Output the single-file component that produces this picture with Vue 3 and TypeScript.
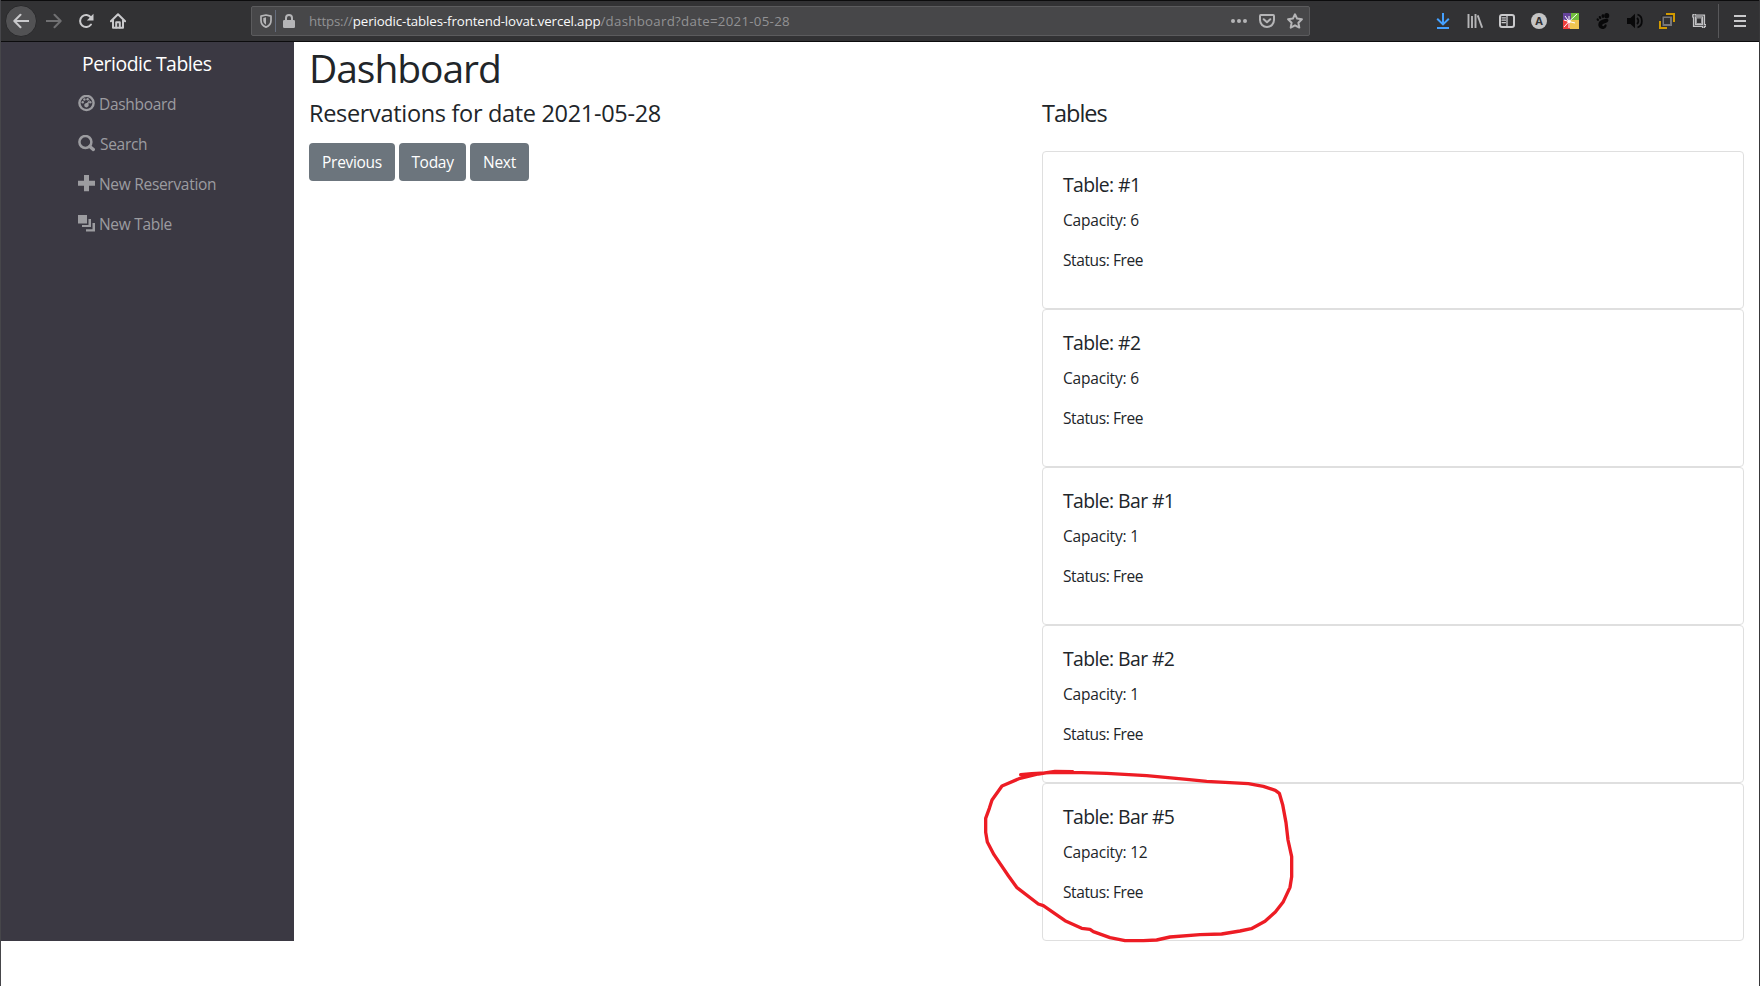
<script setup lang="ts">
interface DiningTable {
  name: string
  capacity: number
  status: string
}

const tables: DiningTable[] = [
  { name: '#1', capacity: 6, status: 'Free' },
  { name: '#2', capacity: 6, status: 'Free' },
  { name: 'Bar #1', capacity: 1, status: 'Free' },
  { name: 'Bar #2', capacity: 1, status: 'Free' },
  { name: 'Bar #5', capacity: 12, status: 'Free' },
]

const date = '2021-05-28'
</script>

<template>
  <div class="window">
    <header class="toolbar">
      <div class="nav-buttons">
        <span class="back">
          <svg width="16" height="16" viewBox="0 0 16 16" class="line"><path d="M15.500 8H1.500M7.500 1.800 1.300 8l6.200 6.200" /></svg>
        </span>
        <svg width="16" height="16" viewBox="0 0 16 16" class="line dim"><path d="M.5 8h14M8.500 1.800 14.700 8l-6.200 6.200" /></svg>
        <svg width="16" height="16" viewBox="0 0 16 16" class="line"><path d="M13 11.500A6 6 0 1 1 13 4.600" /><path d="M15.500.8v6.700H8.800z" class="solid" /></svg>
        <svg width="16" height="16" viewBox="0 0 16 16" class="line"><path d="M.9 8.300 8 1.200l7.100 7.100M3 7v7.800h10V7" /><path d="M6.200 14.500V9.300h3.600v5.200" /></svg>
      </div>

      <div class="address">
        <svg class="shield" width="12" height="14" viewBox="0 0 12 14"><path d="M6 1 11 2.200v4.300c0 3-2 5.500-5 6.600C3 12 1 9.500 1 6.500V2.200z" fill="none" stroke="#b5b5b7" stroke-width="1.700" stroke-linejoin="round" /><path d="M6 3.300v7.400C4 9.500 3.300 8 3.300 6.300V4z" fill="#b5b5b7" /></svg>
        <i class="split"></i>
        <svg class="lock" width="12" height="14" viewBox="0 0 12 14"><path d="M3 7V4a3 3 0 0 1 6 0v3" fill="none" stroke="#b5b5b7" stroke-width="2" /><rect y="6" width="12" height="8" rx="1.300" fill="#b5b5b7" /></svg>
        <span class="url"><span class="scheme">https://</span><b>periodic-tables-frontend-lovat.vercel.app</b><span class="query">/dashboard?date={{ date }}</span></span>
        <div class="address-actions">
          <svg width="16" height="16" viewBox="0 0 16 16" fill="#b5b5b7"><circle cx="2" cy="8" r="2" /><circle cx="8" cy="8" r="2" /><circle cx="14" cy="8" r="2" /></svg>
          <svg width="16" height="16" viewBox="0 0 16 16" class="line soft"><path d="M1.900 2h12.200q.9 0 .9.900V7a7 7 0 0 1-14 0V2.900Q1 2 1.900 2zM4.700 6.200 8 9.300l3.300-3.100" /></svg>
          <svg width="16" height="16" viewBox="0 0 16 16" class="line soft"><path d="m8 1.300 2.100 4.300 4.800.7-3.500 3.400.9 4.900L8 12.300l-4.300 2.300.9-4.900L1.100 6.300l4.800-.7z" /></svg>
        </div>
      </div>

      <div class="extensions">
        <svg width="16" height="16" viewBox="0 0 16 16" fill="none" stroke="#45a1ff" stroke-width="2"><path d="M8 0v11M2.200 5.800 8 11.400l5.800-5.600M2 15h12" /></svg>
        <svg width="16" height="16" viewBox="0 0 16 16" fill="none" stroke="#b5b5b7" stroke-width="1.900"><path d="M1.500 1v14M5 3v12M8.500 1v14" /><path d="m10.700 2.400 4.500 12.400" /></svg>
        <svg width="16" height="16" viewBox="0 0 16 16" class="line"><rect x="1" y="2" width="14" height="12" rx="2" /><path d="M8 2v12" stroke-width="1.300" /><path d="M3 4.800h3.500M3 7.200h3.500M3 9.600h3.500" stroke-width="1.200" /></svg>
        <svg width="16" height="16" viewBox="0 0 16 16"><circle cx="8" cy="8" r="8" fill="#c5c5c5" /><text x="8" y="12" class="badge-letter">A</text></svg>
        <svg width="16" height="16" viewBox="0 0 16 16"><path d="M0 0h8v7H0z" fill="#65439a" /><path d="M8 0h8v7H8z" fill="#70bd3c" /><path d="M0 7h7v9H0z" fill="#ef3f3d" /><path d="M7 7h9v9H7z" fill="#f1c651" /><path d="M6 8.500 14 1M6 8.500l6 1.500M6 8.500V15M6 8.500 1 14M6 8.500 1 7M6 8.500 2 3M6 8.500V3" stroke="#fff" stroke-width="1" /><circle cx="6" cy="8.500" r="1.600" fill="#fff" /></svg>
        <svg width="16" height="16" viewBox="0 0 16 16" fill="#080809"><ellipse cx="11.700" cy="2.800" rx="2.500" ry="2.700" /><ellipse cx="7.900" cy="3" rx="1.400" ry="1.900" transform="rotate(-10 8 3)" /><ellipse cx="5" cy="4.400" rx="1.200" ry="1.600" transform="rotate(-25 5.300 4.400)" /><ellipse cx="2.700" cy="6.300" rx="1.100" ry="1.400" transform="rotate(-35 3.200 6.300)" /><path d="M13.500 7.300c.3-2.600-8.200-1.300-9.700 2.200-1.400 3.200.4 6.300 3.800 6.400 2.700.1 4.300-2.400 4-4-.2-1.200-1.700-.7-2.200.4-.5 1-1.700 1.200-2 .5-.6-1 .5-2 2.500-2.500 1.900-.5 3.400-1.300 3.600-3z" /></svg>
        <svg width="16" height="16" viewBox="0 0 16 16"><path d="M0 5h3.500L8 .8v14.400L3.500 11H0z" fill="#080809" /><path d="M10 5a4 4 0 0 1 0 6M10.500 1.500c5.800 1.800 5.800 11.200 0 13" fill="none" stroke="#080809" stroke-width="1.800" /></svg>
        <svg width="16" height="16" viewBox="0 0 16 16" fill="none"><path d="M7 1h8v8M1 8v7h7" stroke="#d29a00" stroke-width="2" /><rect x="4" y="4" width="8" height="8" stroke="#77777a" stroke-width="2" /><path d="M3 13V3h10" stroke="#19191a" stroke-width=".8" /></svg>
        <svg width="16" height="16" viewBox="0 0 16 16" fill="none"><path d="M1 3h11.500v12M3.500 1v11.500H15" stroke="#c4c4c6" stroke-width="3.200" /><path d="M1.500 3h11v11.500M3.500 1.500v11h11" stroke="#5a5a5c" stroke-width=".9" /><rect x="5.500" y="5" width="5" height="5.500" fill="#323234" stroke="#9a9a9c" /></svg>
        <i class="divider"></i>
        <svg class="menu" width="12" height="16" viewBox="0 0 12 16"><path d="M0 3h12M0 8h12M0 13h12" stroke="#cacacc" stroke-width="2" /></svg>
      </div>
    </header>

    <div class="page">
      <nav class="sidebar">
        <div class="brand">Periodic Tables</div>
        <a class="link">
          <svg width="17" height="17" viewBox="0 0 17 17"><circle cx="8.500" cy="8" r="7.100" fill="none" stroke="#9c9ca0" stroke-width="2.400" /><g fill="#9c9ca0"><circle cx="4.700" cy="7.300" r="1.200" /><circle cx="6.400" cy="4.500" r="1.200" /><circle cx="9.600" cy="4.200" r="1.200" /><circle cx="12.300" cy="7.300" r="1.200" /><path d="m12 4.300-1.500 4.500c.8 2-.4 3.600-2 3.600-1.800 0-2.900-2-1.700-3.600.6-.7 1.300-.8 2.100-.8z" /></g></svg>
          <span>Dashboard</span>
        </a>
        <a class="link search">
          <svg width="17" height="17" viewBox="0 0 17 17" fill="none" stroke="#9c9ca0"><circle cx="7.400" cy="7" r="6" stroke-width="2.500" /><path d="m11.800 11.500 3.500 3" stroke-width="3.400" stroke-linecap="round" /></svg>
          <span>Search</span>
        </a>
        <a class="link">
          <svg width="17" height="17" viewBox="0 0 17 17" fill="#9c9ca0"><path d="M6 0h5v5.700h6v5h-6v5.500H6v-5.500H0v-5h6z" /></svg>
          <span>New Reservation</span>
        </a>
        <a class="link">
          <svg width="17" height="17" viewBox="0 0 17 17" fill="#9c9ca0"><path d="M0 0h9v8.500H0zM10.500 4H13v8H4v-2h6.500zM14.500 8H17v8.500H8v-2.200h6.500z" /></svg>
          <span>New Table</span>
        </a>
      </nav>

      <main class="content">
        <h1>Dashboard</h1>
        <div class="columns">
          <section>
            <h4>Reservations for date {{ date }}</h4>
            <div class="buttons">
              <button type="button" class="previous">Previous</button>
              <button type="button" class="today">Today</button>
              <button type="button" class="next">Next</button>
            </div>
          </section>
          <section>
            <h4 class="tables-title">Tables</h4>
            <div class="cards">
              <article v-for="table in tables" :key="table.name" class="card">
                <h5>Table: {{ table.name }}</h5>
                <p class="capacity">Capacity: {{ table.capacity }}</p>
                <p>Status: {{ table.status }}</p>
              </article>
            </div>
          </section>
        </div>
      </main>
    </div>

    <svg class="marker" width="360" height="236" viewBox="0 0 1080 708">
      <path d="M182 74 215 71 270 68 340 67 440 70 560 77 680 88 740 94 865 101 910 109 946 121 958 130 968 164 978 218 984 270 995 320 995 380 990 412 970 455 946 486 915 514 874 536 840 543 785 552 720 554 630 561 590 570 550 572 495 572 450 563 400 545 390 538 365 535 315 512 250 467 235 462 170 412 145 377 102 314 82 276 77 247 77 205 88 175 96 150 126 108 180 85 235 72 285 64 338 65" />
    </svg>
  </div>
</template>

<style>
body {
  background: #fff;
  overflow: hidden;
}
</style>

<style scoped>
* {
  box-sizing: border-box;
}

.window {
  position: relative;
  width: 1760px;
  height: 986px;
  background: #fff;
  border-left: 1px solid #46464a;
  border-right: 1px solid #38383a;
  color: #212529;
  font-family: 'Open Sans', 'Noto Sans', sans-serif;
  font-size: 15.5px;
  line-height: 24px;
}

svg {
  display: block;
  flex: none;
}

.line {
  fill: none;
  stroke: #cacacc;
  stroke-width: 2;
  stroke-linecap: round;
  stroke-linejoin: round;
}

.line.dim {
  stroke: #707072;
}

.line.soft {
  stroke: #b5b5b7;
}

.line .solid {
  fill: #cacacc;
  stroke: none;
}

.toolbar {
  display: flex;
  align-items: center;
  height: 42px;
  background: #323234;
  border-top: 1px solid #0c0c0d;
  border-bottom: 1px solid #0c0c0d;
}

.nav-buttons {
  display: flex;
  align-items: center;
  gap: 16px;
  width: 250px;
  padding-left: 4px;
}

.back {
  display: grid;
  place-items: center;
  width: 32px;
  height: 32px;
  margin-right: -7px;
  border: 1px solid #29292b;
  border-radius: 50%;
  background: #525254;
}

.address {
  display: flex;
  align-items: center;
  width: 1059px;
  height: 30px;
  border: 1px solid #5b5b5d;
  border-radius: 2px;
  background: #474749;
}

.shield {
  margin-left: 8px;
}

.split {
  width: 1px;
  height: 22px;
  margin: 0 7px 0 3px;
  background: #646c7c;
}

.lock {
  margin-left: 6px;
  margin-left: 0;
}

.url {
  margin-left: 14px;
  color: #929294;
  font-size: 13.300px;
  line-height: 20px;
  white-space: nowrap;
}

.url b {
  color: #f9f9fa;
  font-weight: 400;
  letter-spacing: -0.12px;
}

.scheme {
  letter-spacing: -0.2px;
}

.query {
  letter-spacing: 0.27px;
}

.address-actions {
  display: flex;
  gap: 12px;
  margin-left: auto;
  padding-right: 6px;
}

.extensions {
  display: flex;
  align-items: center;
  gap: 16px;
  margin-left: 125px;
}

.badge-letter {
  fill: #323234;
  font: 700 11px 'Open Sans', sans-serif;
  text-anchor: middle;
}

.divider {
  width: 1px;
  height: 34px;
  margin: 0 -1px 0 -5px;
  background: #58585a;
}

.page {
  display: flex;
}

.sidebar {
  width: 293px;
  height: 899px;
  padding: 3px 0 0 77px;
  background: #3b3943;
  color: #9c9ca0;
}

.brand {
  height: 39px;
  padding-left: 4px;
  color: #fff;
  font-size: 19.400px;
  line-height: 37px;
  letter-spacing: -0.47px;
}

.link {
  display: flex;
  align-items: flex-start;
  gap: 4px;
  height: 40px;
  padding-top: 11px;
  letter-spacing: -0.3px;
}

.link span {
  margin-top: -3px;
}

.search {
  gap: 5px;
}

.content {
  width: 1465px;
  padding: 0 15px;
}

h1,
h4,
h5,
p {
  margin: 0;
  font-weight: 400;
}

h1 {
  height: 56px;
  font-size: 39px;
  line-height: 52px;
  letter-spacing: -1.050px;
}

.columns {
  display: grid;
  grid-template-columns: 702px 702px;
  gap: 31px;
}

h4 {
  height: 29px;
  font-size: 23.500px;
  line-height: 31px;
  letter-spacing: -0.32px;
}

.tables-title {
  letter-spacing: -1px;
}

.buttons {
  display: flex;
  gap: 4px;
  margin-top: 16px;
}

button {
  height: 38px;
  padding: 0 0 1px;
  border: 0;
  border-radius: 4px;
  background: #6c757d;
  color: #fff;
  font: inherit;
  letter-spacing: -0.3px;
}

.previous {
  width: 86px;
}

.today {
  width: 67px;
}

.next {
  width: 59px;
}

.cards {
  margin-top: 24px;
}

.card {
  height: 158px;
  padding: 20px 20px;
  border: 1px solid #dfdfdf;
  border-radius: 4px;
}

h5 {
  height: 36px;
  font-size: 19.400px;
  line-height: 25px;
  letter-spacing: -0.6px;
}

.card p {
  height: 40px;
  letter-spacing: -0.4px;
}

.card .capacity {
  letter-spacing: -0.2px;
}

.marker {
  position: absolute;
  left: 959px;
  top: 750px;
}

.marker path {
  fill: none;
  stroke: #ed1c24;
  stroke-width: 10;
  stroke-linecap: round;
  stroke-linejoin: round;
}
</style>
